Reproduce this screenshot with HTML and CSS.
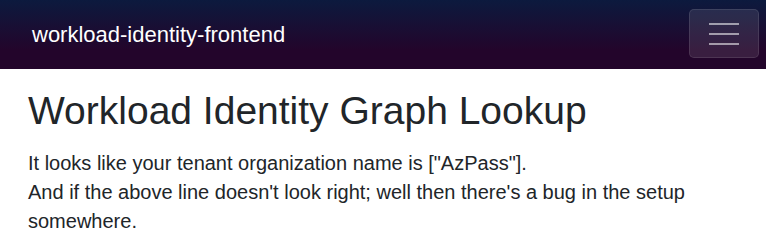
FILE: index.html
```html
<!DOCTYPE html>
<html lang="en">
<head>
<meta charset="utf-8">
<title>workload-identity-frontend</title>
<link rel="stylesheet" href="styles.css">
</head>
<body>
<header class="topbar">
  <a class="brand" href="#">workload-identity-frontend</a>
  <button class="toggler" type="button" aria-label="Navigation menu">
    <span class="bar"></span>
    <span class="bar"></span>
    <span class="bar"></span>
  </button>
</header>
<main class="content">
  <h1 class="title">Workload Identity Graph Lookup</h1>
  <p class="message">It looks like your tenant organization name is ["AzPass"].<br>And if the above line doesn't look right; well then there's a bug in the setup somewhere.</p>
</main>
</body>
</html>
```
FILE: styles.css
```css
html, body {
  margin: 0;
  padding: 0;
  background: #ffffff;
  font-family: "Liberation Sans", Arial, Helvetica, sans-serif;
  color: #212529;
}

.topbar {
  height: 69px;
  display: flex;
  align-items: center;
  justify-content: space-between;
  padding: 0 7px 0 32px;
  background-image: linear-gradient(180deg, #0c1a3e 0%, #23052b 72%);
  box-sizing: border-box;
}

.brand {
  color: #ffffff;
  text-decoration: none;
  font-size: 22px;
  line-height: 1;
}

.toggler {
  width: 70px;
  height: 49px;
  margin-top: -2px;
  padding: 0;
  border: 1px solid rgba(255, 255, 255, 0.1);
  border-radius: 5px;
  background-color: rgba(255, 255, 255, 0.1);
  display: flex;
  flex-direction: column;
  align-items: center;
  justify-content: center;
  gap: 8px;
}

.bar {
  display: block;
  width: 30px;
  height: 2px;
  background-color: rgba(255, 255, 255, 0.55);
}

.content {
  padding: 0 28px;
}

.title {
  margin: 19px 0 0 0;
  font-size: 39px;
  font-weight: 400;
  line-height: 1.2;
}

.message {
  margin: 14px 0 0 0;
  font-size: 20px;
  line-height: 29px;
}
```
